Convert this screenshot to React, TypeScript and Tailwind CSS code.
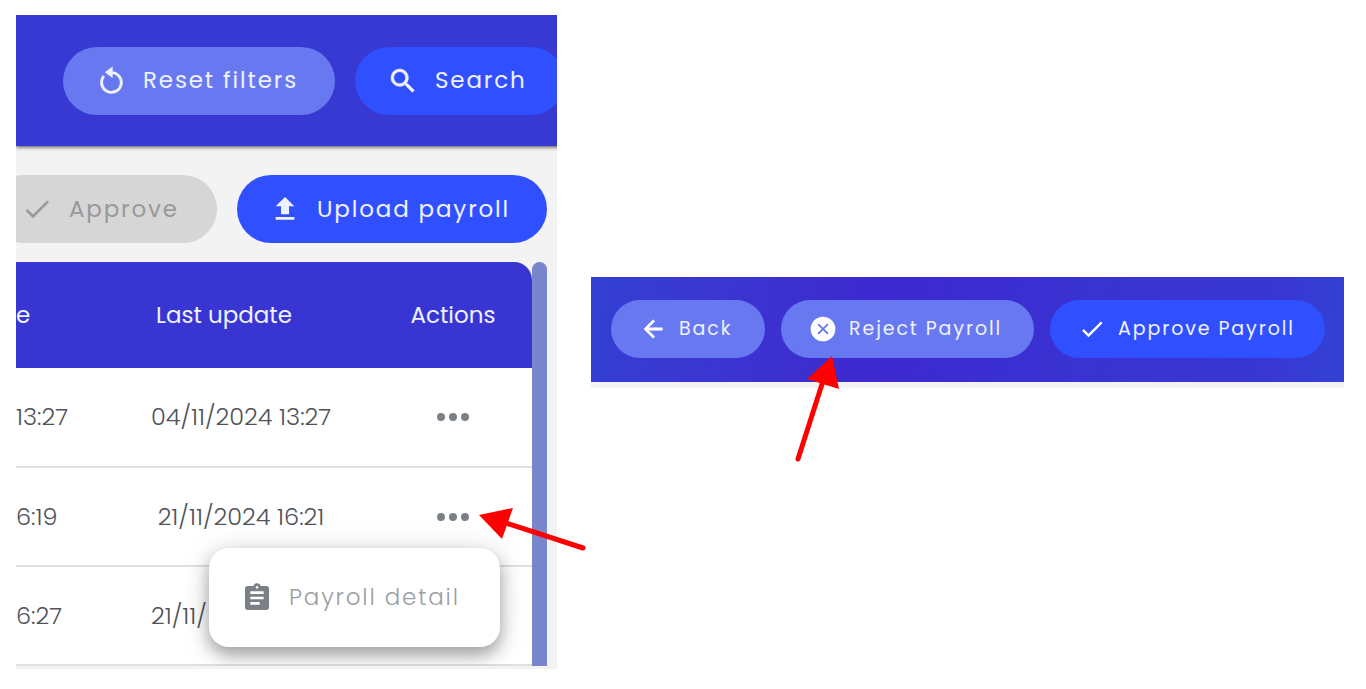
import type { ReactNode } from 'react'

const icons = {
    magnify: 'M9.5,3A6.5,6.5 0 0,1 16,9.5C16,11.11 15.41,12.59 14.44,13.73L14.71,14H15.5L20.5,19L19,20.5L14,15.5V14.71L13.73,14.44C12.59,15.41 11.11,16 9.5,16A6.5,6.5 0 0,1 3,9.5A6.5,6.5 0 0,1 9.5,3M9.5,5C7,5 5,7 5,9.5C5,12 7,14 9.5,14C12,14 14,12 14,9.5C14,7 12,5 9.5,5Z',
    check: 'M21,7L9,19L3.5,13.5L4.91,12.09L9,16.17L19.59,5.59L21,7Z',
    upload: 'M9,16V10H5L12,3L19,10H15V16H9M5,20V18H19V20H5Z',
    clipboard: 'M17,9H7V7H17M17,13H7V11H17M14,17H7V15H14M12,3A1,1 0 0,1 13,4A1,1 0 0,1 12,5A1,1 0 0,1 11,4A1,1 0 0,1 12,3M19,3H14.82C14.4,1.84 13.3,1 12,1C10.7,1 9.6,1.84 9.18,3H5A2,2 0 0,0 3,5V19A2,2 0 0,0 5,21H19A2,2 0 0,0 21,19V5A2,2 0 0,0 19,3Z',
    back: 'M20,11V13H8L13.5,18.5L12.08,19.92L4.16,12L12.08,4.08L13.5,5.5L8,11H20Z',
    dots: 'M16,12A2,2 0 0,1 18,10A2,2 0 0,1 20,12A2,2 0 0,1 18,14A2,2 0 0,1 16,12M10,12A2,2 0 0,1 12,10A2,2 0 0,1 14,12A2,2 0 0,1 12,14A2,2 0 0,1 10,12M4,12A2,2 0 0,1 6,10A2,2 0 0,1 8,12A2,2 0 0,1 6,14A2,2 0 0,1 4,12Z',
}

type IconName = keyof typeof icons | 'reset' | 'reject'

const Icon = ({ name, className }: { name: IconName; className: string }) => (
    <svg viewBox="0 0 24 24" fill="currentColor" aria-hidden="true" className={`shrink-0 ${className}`}>
        {name === 'reset' && (
            <>
                <path d="M12.3 5.7A7.4 7.4 0 1 1 6.7 8.3" fill="none" stroke="currentColor" strokeWidth="2.2" />
                <path d="M7.4 5.4L13.2 1.2V9.8Z" />
            </>
        )}
        {name === 'reject' && (
            <>
                <circle cx="12" cy="12" r="10.6" />
                <path d="M7.8 7.8L16.2 16.2M16.2 7.8L7.8 16.2" stroke="#6878f0" strokeWidth="1.6" />
            </>
        )}
        {name !== 'reset' && name !== 'reject' && (
            <path d={icons[name]} stroke="currentColor" strokeWidth={name === 'magnify' || name === 'back' ? 0.5 : 0} />
        )}
    </svg>
)

type PillProps = { icon: IconName; className: string; disabled?: boolean; children: ReactNode }

const Pill = ({ icon, className, disabled, children }: PillProps) => (
    <button
        type="button"
        disabled={disabled}
        className={`flex h-[68px] shrink-0 items-center gap-4 rounded-full pl-8 text-[23px] tracking-[0.08em] whitespace-nowrap ${className}`}
    >
        <Icon name={icon} className="size-8" />
        {children}
    </button>
)

const SmallPill = ({ icon, className, children }: PillProps) => (
    <button
        type="button"
        className={`flex h-[58px] shrink-0 items-center gap-3 rounded-full pl-7 text-[19px] tracking-widest whitespace-nowrap text-indigo-50 ${className}`}
    >
        <Icon name={icon} className="size-7 text-white" />
        {children}
    </button>
)

const rows = [
    { time: '13:27', updated: '04/11/2024 13:27' },
    { time: '6:19', updated: '21/11/2024 16:21', open: true },
    { time: '6:27', updated: '21/11/' },
]

const PayrollMenu = () => (
    <div className="absolute top-20 right-8 z-10 rounded-[20px] bg-white shadow-[0_8px_16px_rgba(0,0,0,0.3),0_4px_30px_rgba(0,0,0,0.15)]">
        <button
            type="button"
            className="flex h-[99px] w-[291px] items-center gap-4 pl-8 text-[23px] tracking-[0.08em] whitespace-nowrap text-[#9a9ea3]"
        >
            <Icon name="clipboard" className="size-8 text-[#7b8087]" />
            Payroll detail
        </button>
    </div>
)

const PayrollTable = () => (
    <div className="flex pr-[10px]">
        <div className="min-w-0 grow overflow-hidden rounded-tr-[18px] bg-white">
            <table className="w-full table-fixed text-center text-[23px] whitespace-nowrap">
                <thead>
                    <tr className="h-[106px] bg-[#3835d2] text-indigo-50">
                        <th className="w-[92px] text-left font-normal">e</th>
                        <th className="pr-[34px] font-normal">Last update</th>
                        <th className="w-[158px] font-normal">Actions</th>
                    </tr>
                </thead>
                <tbody className="text-2xl font-light text-[#505358]">
                    {rows.map((row) => (
                        <tr key={row.time} className="h-[99px] border-b-2 border-[#e0e0e0]">
                            <td className="text-left">{row.time}</td>
                            <td className={row.updated.length < 16 ? 'pl-[43px] text-left' : ''}>{row.updated}</td>
                            <td className="relative">
                                <button type="button" aria-label="Row actions" className="align-middle text-[#7b8087]">
                                    <Icon name="dots" className="size-12" />
                                </button>
                                {row.open && <PayrollMenu />}
                            </td>
                        </tr>
                    ))}
                </tbody>
            </table>
        </div>
        <div className="w-[15px] shrink-0 rounded-t-full bg-[#7986cb]" />
    </div>
)

const ListPanel = () => (
    <section className="h-[654px] min-w-0 overflow-hidden bg-[#f3f3f3]">
        <div className="-mr-2 flex h-[131px] items-center justify-end gap-5 bg-[#3839d3] text-indigo-50 shadow-[0_1px_4px_rgba(0,0,0,0.7)]">
            <Pill icon="reset" className="w-[272px] bg-[#6878f0]">Reset filters</Pill>
            <Pill icon="magnify" className="w-[210px] bg-[#304ffe]">Search</Pill>
        </div>
        <div className="flex justify-end gap-5 pt-[29px] pr-[10px] pb-[19px]">
            <Pill icon="check" disabled className="w-[228px] bg-[#d6d6d6] text-[#999999]">Approve</Pill>
            <Pill icon="upload" className="w-[310px] bg-[#304ffe] text-indigo-50">Upload payroll</Pill>
        </div>
        <PayrollTable />
    </section>
)

const DetailHeader = () => (
    <section className="relative mt-[262px] min-w-0 border-b-[6px] border-[#f3f3f3]">
        <div className="flex h-[105px] items-start gap-4 bg-[linear-gradient(100deg,#3340d3_0%,#3b35d1_18%,#3d29cf_38%,#3a32d2_65%,#3837d3_90%,#3342d4_100%)] pt-[23px] pl-5">
            <SmallPill icon="back" className="w-[154px] bg-[#6878f0]">Back</SmallPill>
            <SmallPill icon="reject" className="w-[253px] bg-[#6878f0]">Reject Payroll</SmallPill>
            <SmallPill icon="check" className="w-[275px] bg-[#304ffe]">Approve Payroll</SmallPill>
        </div>
        <svg viewBox="0 0 50 110" className="absolute top-[77px] left-[200px] w-[50px]" aria-hidden="true">
            <path d="M7 105L33 24" stroke="#f00" strokeWidth="5" strokeLinecap="round" />
            <path d="M41 2L16 25L48 35Z" fill="#f00" />
        </svg>
    </section>
)

const App = () => (
    <main className="relative grid grid-cols-[541fr_753fr] items-start gap-[34px] bg-white pt-[15px] pr-[22px] pb-5 pl-4 font-[Poppins,Inter,sans-serif]">
        <ListPanel />
        <DetailHeader />
        <svg viewBox="0 0 110 50" className="absolute top-[502px] left-[478px] w-[110px]" aria-hidden="true">
            <path d="M25 20L105 46" stroke="#f00" strokeWidth="5" strokeLinecap="round" />
            <path d="M1 13L35 6L24 37Z" fill="#f00" />
        </svg>
    </main>
)

export default App
